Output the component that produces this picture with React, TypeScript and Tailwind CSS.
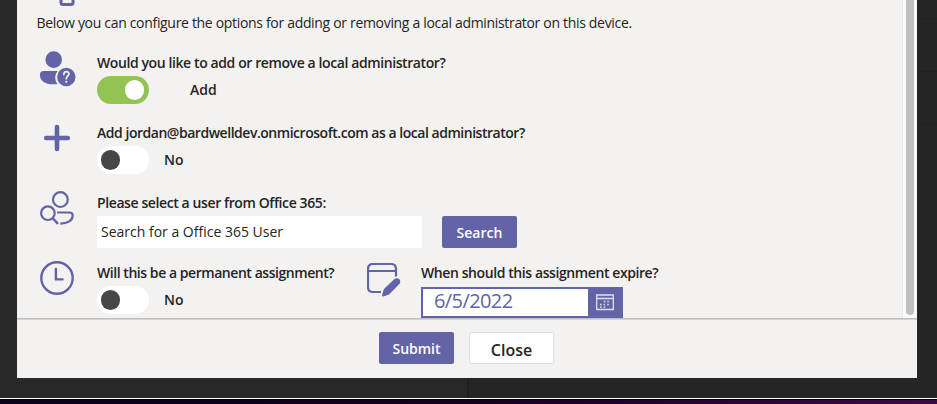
import type { ReactNode } from 'react';

function PersonQuestion() {
  return (
    <svg width="36" height="36" viewBox="0 0 36 36" fill="#6264a7">
      <circle cx="13.7" cy="8.6" r="8.3" />
      <path d="M3.5 20H17.6A10.300 10.300 0 0 0 17.4 33C8 34.5 0 31 0 24.500V23.500Q0 20 3.500 20Z" />
      <circle cx="26.300" cy="26" r="9.200" />
      <path d="M23.800 23.600C23.800 19.600 28.900 19.800 28.900 22.800C28.900 25.200 26.300 25.100 26.300 27.700" fill="none" stroke="#f3f2f1" strokeWidth="1.700" strokeLinecap="round" />
      <circle cx="26.300" cy="30.800" r="1.100" fill="#f3f2f1" />
    </svg>
  );
}

function Plus() {
  return (
    <svg width="36" height="36" viewBox="0 0 36 36" fill="none" stroke="#6264a7" strokeWidth="4.600" strokeLinecap="round">
      <path d="M17 6V28M6.200 17H27.800" />
    </svg>
  );
}

function PeopleSearch() {
  return (
    <svg width="36" height="36" viewBox="0 0 36 36" fill="none" stroke="#6264a7" strokeWidth="2.200">
      <circle cx="20.400" cy="8.600" r="7.400" />
      <circle cx="7.900" cy="22.200" r="6.800" />
      <path d="M12.500 27L18 32.800" strokeWidth="2.500" />
      <path d="M17 21.500H29.500Q32.700 21.500 32.700 24.400C32.700 29.500 27.500 32.600 20.300 32.600" />
    </svg>
  );
}

function Clock() {
  return (
    <svg width="36" height="36" viewBox="0 0 36 36" fill="none" stroke="#6264a7" strokeWidth="2.400">
      <circle cx="17" cy="17" r="15.700" />
      <path d="M15.900 8V18.400H22.500" strokeLinecap="round" strokeLinejoin="round" />
    </svg>
  );
}

function CalendarEdit() {
  return (
    <svg width="36" height="36" viewBox="0 0 36 36" fill="none" stroke="#6264a7" strokeWidth="2.200">
      <path d="M29 13.500V6Q29 1 24 1H6Q1 1 1 6V24Q1 29 6 29H14M1 8H29" />
      <path d="M15.200 31.800L16.500 27.300Q16.800 26.200 17.700 25.300L27.200 16.300C30.800 13.100 35.500 17.500 32.200 21.300L22.800 30.700Q21.800 31.600 20.700 32L17 33.300Q14.700 34 15.200 31.800Z" fill="#6264a7" stroke="none" />
    </svg>
  );
}

function CalendarGrid() {
  return (
    <svg width="18" height="17" viewBox="0 0 18 17" fill="none" stroke="#dfdff0">
      <path d="M.7 1H17.300V15.500H.7ZM.7 4.500H17.300" strokeWidth="1.300" />
      <path d="M7.700 7.500h1.600m2 0h1.600M4 10.500h1.600m2 0h1.600m2 0h1.600M4 13h1.600m2 0h1.600" strokeWidth="1.500" />
    </svg>
  );
}

function Toggle({ on = false }: { on?: boolean }) {
  return (
    <span className={`flex h-7 w-[52px] items-center rounded-full ${on ? 'justify-end bg-[#92c353] pr-[5px]' : 'bg-white pl-1'}`}>
      <span className={`h-5 w-[19px] rounded-full ${on ? 'bg-white' : 'bg-[#484644]'}`} />
    </span>
  );
}

function Row({ icon, children }: { icon: ReactNode; children: ReactNode }) {
  return (
    <div className="flex h-[70px] items-start">
      <div className="ml-[23px] w-[57px] shrink-0 pt-0.5">{icon}</div>
      {children}
    </div>
  );
}

function Label({ children }: { children: ReactNode }) {
  return <div className="h-[27px] pt-1 text-[14px] leading-5 font-semibold whitespace-nowrap">{children}</div>;
}

export default function App() {
  return (
    <div className="flex h-[404px] w-[937px] flex-col overflow-hidden bg-[#252525] font-['Open_Sans','Noto_Sans',sans-serif] text-[#252423]">
      <div className="flex h-[398px] items-start">
        <div className="flex h-[398px] w-[469px] shrink-0 border-r-2 border-[#1f1f1f] bg-[#282828] pl-[17px]">
          <main className="relative z-10 flex h-[378px] w-[900px] shrink-0 flex-col bg-[#f3f2f1]">
            <section className="flex h-[318px] overflow-hidden">
              <div className="w-[885px]">
                <div className="flex h-[13px] items-start pl-[42px]">
                  <svg width="16" height="7" viewBox="0 0 16 7" fill="none" stroke="#6264a7" strokeWidth="3">
                    <path d="M2 -2V2.500Q2 4.500 4 4.500H12Q14 4.500 14 2.500V-2" />
                  </svg>
                </div>
                <p className="h-9 pl-[19.500px] text-[14px] leading-5 tracking-[-0.32px] whitespace-nowrap">
                  Below you can configure the options for adding or removing a local administrator on this device.
                </p>
                <Row icon={<PersonQuestion />}>
                  <div>
                    <Label><span className="tracking-[-0.4px]">Would you like to add or remove a local administrator?</span></Label>
                    <div className="flex items-center">
                      <Toggle on />
                      <span className="ml-[41px] text-[14px] leading-5 font-semibold">Add</span>
                    </div>
                  </div>
                </Row>
                <Row icon={<Plus />}>
                  <div>
                    <Label><span className="tracking-[-0.47px]">Add jordan@bardwelldev.onmicrosoft.com as a local administrator?</span></Label>
                    <div className="flex items-center">
                      <Toggle />
                      <span className="ml-[15px] text-[14px] leading-5 font-semibold">No</span>
                    </div>
                  </div>
                </Row>
                <Row icon={<PeopleSearch />}>
                  <div>
                    <Label><span className="tracking-[-0.4px]">Please select a user from Office 365:</span></Label>
                    <div className="flex gap-5">
                      <div className="flex h-8 w-[325px] items-center bg-white pb-[2px] pl-1 text-[14px]">Search for a Office 365 User</div>
                      <button className="h-8 w-[75px] rounded-[2px] bg-[#6264a7] text-[14px] font-semibold text-white">Search</button>
                    </div>
                  </div>
                </Row>
                <Row icon={<Clock />}>
                  <div className="w-[270px]">
                    <Label><span className="tracking-[-0.45px]">Will this be a permanent assignment?</span></Label>
                    <div className="flex items-center">
                      <Toggle />
                      <span className="ml-[15px] text-[14px] leading-5 font-semibold">No</span>
                    </div>
                  </div>
                  <div className="w-[54px] pt-1"><CalendarEdit /></div>
                  <div>
                    <Label><span className="tracking-[-0.41px]">When should this assignment expire?</span></Label>
                    <div className="mt-px flex h-[31px] w-[202px] border-2 border-[#6264a7] bg-white">
                      <div className="w-[165px] pl-[11px] text-[20px] leading-6 tracking-[-0.6px] text-[#6264a7]">6/5/2022</div>
                      <div className="flex flex-1 items-center justify-center bg-[#6264a7]"><CalendarGrid /></div>
                    </div>
                  </div>
                </Row>
              </div>
              <div className="flex w-[15px] items-end justify-center border-l border-[#e8e8e8] bg-[#fafafa] pb-[3px]">
                <div className="h-[315px] w-2 rounded-b-full bg-[#c1c1c1]" />
              </div>
            </section>
            <div className="h-px bg-[#bebebe]" />
            <div className="h-px bg-[#d6d5d5]" />
            <footer className="flex h-[58px] items-start pt-3 pl-[362px]">
              <button className="h-8 w-[75px] rounded-[2px] bg-[#6264a7] text-[14px] font-semibold text-white">Submit</button>
              <button className="ml-[15px] h-8 w-[85px] rounded-[2px] border border-[#e1dfdd] bg-white pt-1 text-[16px] font-semibold">Close</button>
            </footer>
          </main>
        </div>
        <div className="flex flex-1 flex-col">
          <div className="h-[19px] border-b border-[#202020]" />
          <div className="h-[53px] border-b border-[#202020]" />
          <div className="h-[53px] border-b border-[#202020]" />
        </div>
      </div>
      <div className="h-px bg-white" />
      <div className="h-[5px] border-t border-black bg-linear-to-r from-[#08001d] via-[#12001f] to-[#3b0a45]" />
    </div>
  );
}
